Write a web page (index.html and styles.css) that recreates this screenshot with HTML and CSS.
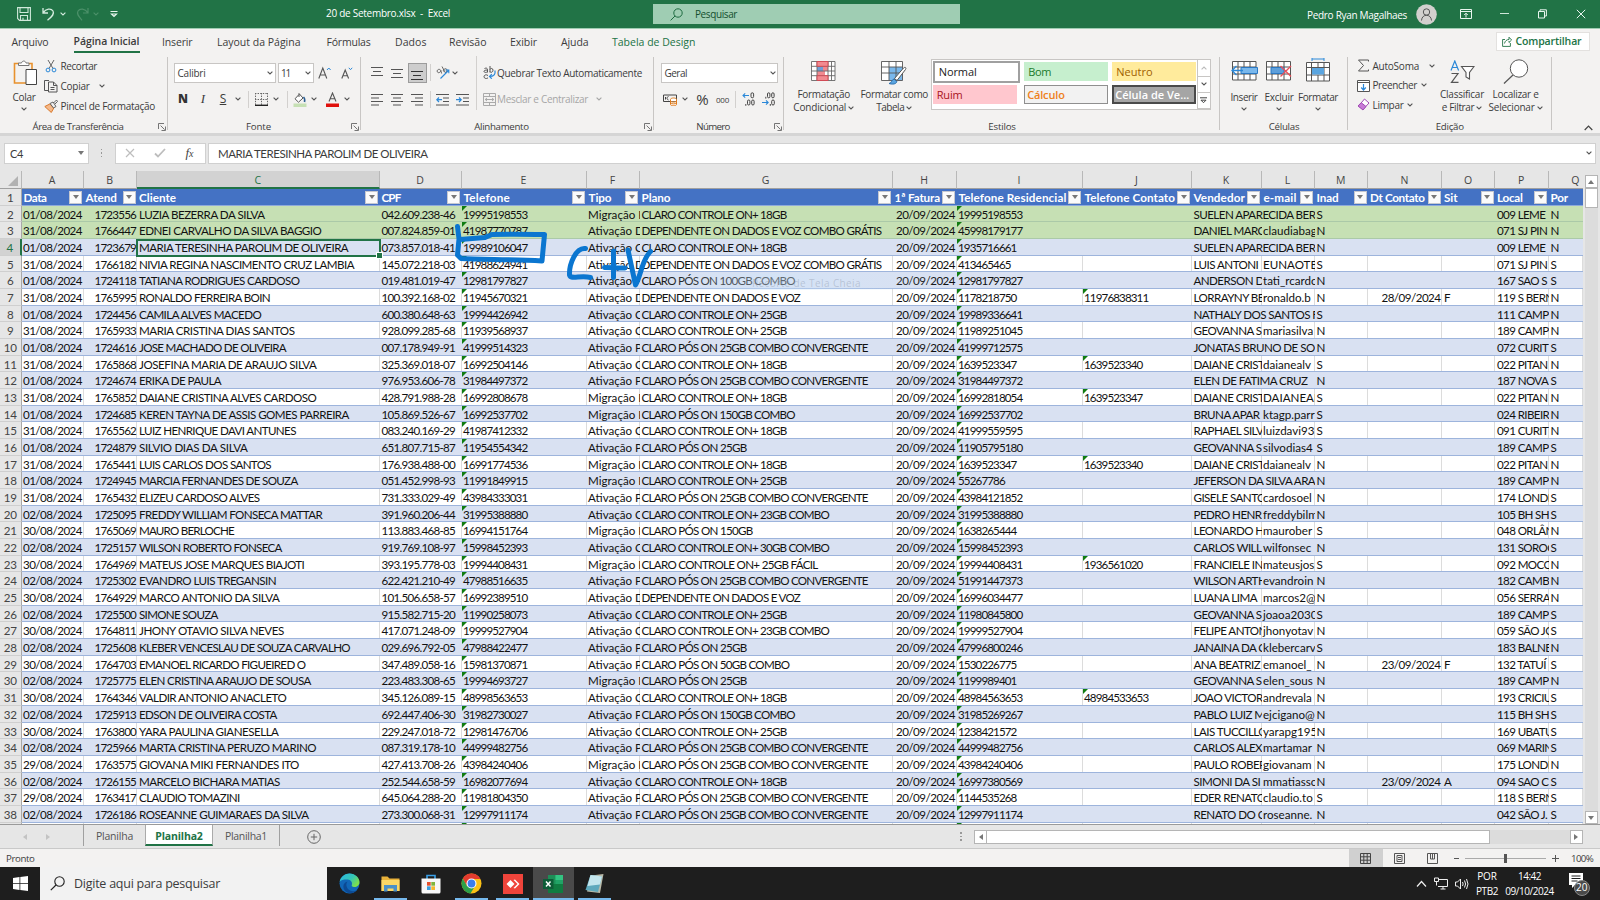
FILE: index.html
```
<!DOCTYPE html>
<html lang="pt-BR">
<head>
<meta charset="utf-8">
<title>20 de Setembro.xlsx - Excel</title>
<link rel="stylesheet" href="styles.css">
</head>
<body>
<svg class="defs" width="0" height="0">
  <symbol id="chev" viewBox="0 0 6 4"><path d="M.6.6 3 3 5.4.6" fill="none" stroke="currentColor" stroke-width="1.1"/></symbol>
  <symbol id="launch" viewBox="0 0 8 8"><path d="M.5 6V.5H6M2.6 2.6l4 4M7.5 3.5v4h-4" fill="none" stroke="#666" stroke-width=".9"/></symbol>
</svg>
<div class="app">
  <header class="titlebar">
    <div class="quick">
      <svg width="14" height="14" viewBox="0 0 14 14"><path d="M.6.6h12.8v12.8H2.5L.6 11.5zM3 .8v4.7h8V.8M3.5 13.2V8.5h7v4.7M6 13v-2.3" fill="none" stroke="#cfe9da" stroke-width="1.1"/></svg>
      <svg width="13" height="14" viewBox="0 0 13 14"><path d="M1 1v5h5M1.200 5.700C4 1.500 9 1 11 4c1.700 3-.8 5.500-5.500 9.300" fill="none" stroke="#d5ecdf" stroke-width="1.300"/></svg>
      <svg class="c lite" width="6" height="4"><use href="#chev"/></svg>
      <svg width="13" height="14" viewBox="0 0 13 14"><path d="M12 1v5H7M11.800 5.700C9 1.500 4 1 2 4c-1.700 3 .8 5.500 4 9.300" fill="none" stroke="#4b9069" stroke-width="1.200"/></svg>
      <svg class="c faded" width="6" height="4"><use href="#chev"/></svg>
      <svg width="8" height="8" viewBox="0 0 8 8"><path d="M.5 1.500h7M1.500 4 4 6.500 6.500 4z" fill="none" stroke="#e6f4ec" stroke-width="1.200"/></svg>
    </div>
    <div class="doc"><span data-w="124">20 de Setembro.xlsx&nbsp; - &nbsp;Excel</span></div>
    <div class="search"><svg width="13" height="13" viewBox="0 0 13 13"><circle cx="8" cy="5" r="4.200" fill="none" stroke="#1e6b41"/><path d="M5 8 .6 12.400" stroke="#1e6b41"/></svg><span data-w="42">Pesquisar</span></div>
    <div class="user"><span data-w="100">Pedro Ryan Magalhaes</span>
      <svg width="21" height="21" viewBox="0 0 21 21"><circle cx="10.500" cy="10.500" r="10.300" fill="#d2d0ce"/><circle cx="10.500" cy="8" r="3.200" fill="none" stroke="#555"/><path d="M5.500 16.500c.3-7 9.700-7 10 0" fill="none" stroke="#555"/></svg>
    </div>
    <div class="winbtns">
      <svg width="12" height="10" viewBox="0 0 12 10"><path d="M.5.500h11v9H.5zM.5 2.500h11M6 8.500v-4M4.200 6 6 4.200 7.800 6" fill="none" stroke="#e8f5ee"/></svg>
      <svg width="9" height="10" viewBox="0 0 9 10"><path d="M0 4.500h9" stroke="#cfe6d9"/></svg>
      <svg width="9" height="10" viewBox="0 0 9 10"><path d="M.5 2.500h6v6.500h-6zM2 2.500V.8h6.400V7H6.500" fill="none" stroke="#e8f5ee"/></svg>
      <svg width="10" height="10" viewBox="0 0 10 10"><path d="m.8.800 8.400 8.400M9.200.8.800 9.200" stroke="#e8f5ee"/></svg>
    </div>
  </header>
  <nav class="tabs">
    <span data-w="37">Arquivo</span><b class="on"><span data-w="66">Página Inicial</span></b><span data-w="30.5">Inserir</span><span data-w="83.5">Layout da Página</span><span data-w="44">Fórmulas</span><span data-w="31.5">Dados</span><span data-w="37.500">Revisão</span><span data-w="27">Exibir</span><span data-w="27.500">Ajuda</span><span class="green" data-w="83.500">Tabela de Design</span>
    <div class="share"><svg width="10" height="11" viewBox="0 0 10 11"><path d="M3 3.500H.6v6.900h7.800V7M2.500 7.500C3 5 4.500 3.600 7 3.500V1.200L9.600 4 7 6.500V5" fill="none" stroke="#217346" stroke-width=".9"/></svg><b data-w="66">Compartilhar</b></div>
  </nav>

  <section class="ribbon">
    <div class="group g-clip">
      <div class="content">
        <div class="big">
          <svg width="25" height="26" viewBox="0 0 25 26"><path d="M6 3.500H1.500V23H13M16 3.500h3V9" fill="none" stroke="#e8912d" stroke-width="1.600"/><path d="M5.500 5.500V3h3c.5-2.600 4-2.600 4.500 0h3v2.500z" fill="#fff" stroke="#777"/><path d="M13 9.500h10.500v15H13z" fill="#fff" stroke="#444"/></svg>
          <span data-w="23">Colar</span><svg class="c" width="6" height="4"><use href="#chev"/></svg>
        </div>
        <div class="list">
          <div><svg width="14" height="14" viewBox="0 0 14 14"><path d="m4 1 5 8.500M10 1 5 9.500" stroke="#666" fill="none"/><circle cx="4" cy="11" r="1.900" fill="none" stroke="#2b88d8"/><circle cx="10" cy="11" r="1.900" fill="none" stroke="#2b88d8"/></svg><span data-w="36.500">Recortar</span></div>
          <div><svg width="14" height="14" viewBox="0 0 14 14"><path d="M4 11.500H.5V1.500H5M4.500 3h5l3.500 3.500V13H4.500zM9.500 3v3.500H13M6.500 8.500h4M6.500 10.500h4" fill="none" stroke="#555"/></svg><span data-w="29">Copiar</span><svg class="c far" width="6" height="4"><use href="#chev"/></svg></div>
          <div><svg width="14" height="14" viewBox="0 0 14 14"><path d="m.8 7.500 5-2.500 4 4-2.500 4.500z" fill="#f5b98a" stroke="#d9792b"/><path d="M6 4.500 9.500 9 12 7.500 9 3zM9.500 4l3-3 1 1.500-2.500 2.500" fill="#eee" stroke="#555" stroke-width=".9"/></svg><span data-w="94.500">Pincel de Formatação</span></div>
        </div>
      </div>
      <div class="label"><span data-w="91">Área de Transferência</span><svg width="8" height="8"><use href="#launch"/></svg></div>
    </div>

    <div class="group g-font">
      <div class="content rows">
        <div class="r f1">
          <div class="box"><span data-w="28">Calibri</span><svg class="c" width="6" height="4"><use href="#chev"/></svg></div><i></i>
          <div class="box"><span data-w="9">11</span><svg class="c" width="6" height="4"><use href="#chev"/></svg></div>
          <svg width="14" height="14" viewBox="0 0 14 14"><path d="M.8 12.500 4.800 2l4 10.500M2.200 9h5.200" fill="none" stroke="#555" stroke-width="1.100"/><path d="m9 4 1.800-2 1.800 2" fill="none" stroke="#2b88d8"/></svg>
          <svg width="12" height="14" viewBox="0 0 12 14"><path d="M.8 12.500 4.200 4l3.400 8.500M2 9.700h4.400" fill="none" stroke="#555" stroke-width="1.100"/><path d="m7.800 1.800 1.700 1.900 1.700-1.900" fill="none" stroke="#2b88d8"/></svg>
        </div>
        <div class="r f2">
          <b class="n">N</b><em>I</em><u>S</u><svg class="c" width="6" height="4"><use href="#chev"/></svg><i class="sep"></i>
          <svg width="13" height="13" viewBox="0 0 13 13"><path d="M.5 0v12M6.500 0v12M12.500 0v12M0 .5h13M0 6.500h13" fill="none" stroke="#666" stroke-dasharray="1.400 1.200"/><path d="M0 12.300h13" stroke="#222" stroke-width="1.400"/></svg>
          <svg class="c" width="6" height="4"><use href="#chev"/></svg><i class="sep"></i>
          <svg width="14" height="15" viewBox="0 0 14 15"><path d="M6 2.500 2 6.800l3.500 3.400L10 6 6 1.500V5" fill="#fff" stroke="#555"/><path d="M10.500 5c1 1 1.600 2.500 1 5" fill="none" stroke="#2b5f94" stroke-width="1.600"/><path d="M.5 11.500h13v3.500H.5z" fill="#c6e0b4"/></svg>
          <svg class="c" width="6" height="4"><use href="#chev"/></svg>
          <svg width="13" height="15" viewBox="0 0 13 15"><path d="M3 9.500 6.500 1l3.500 8.500M4.200 6.700h4.600" fill="none" stroke="#555" stroke-width="1.100"/><path d="M0 11.500h13V15H0z" fill="#e0110c"/></svg>
          <svg class="c" width="6" height="4"><use href="#chev"/></svg>
        </div>
      </div>
      <div class="label"><span data-w="25">Fonte</span><svg width="8" height="8"><use href="#launch"/></svg></div>
    </div>

    <div class="group g-align">
      <div class="content split">
        <div class="rows left">
          <div class="r a1">
            <svg width="12" height="14" viewBox="0 0 12 14"><path d="M0 1.500h12M2 5.500h8M0 9.500h12" stroke="#555"/></svg>
            <svg width="12" height="14" viewBox="0 0 12 14"><path d="M0 3.500h12M2 7.500h8M0 11.500h12" stroke="#555"/></svg>
            <div class="pressed"><svg width="12" height="14" viewBox="0 0 12 14"><path d="M0 5.500h12M2 9.500h8M0 13.500h12" stroke="#333"/></svg></div>
            <i class="sep"></i>
            <svg width="14" height="14" viewBox="0 0 14 14"><path d="M4.800 4.500c-1-2-3.800-1.200-3.600.8s3 2 3.600-.8l.8 3M6 .5l3.500 6.500c2-1 2-4.500 0-4.300S7 4.500 7.600 5.500" fill="none" stroke="#555" stroke-width=".9"/><path d="m4.500 12.500 8-8M9.500 4h3.300v3.300" fill="none" stroke="#2b88d8" stroke-width="1.100"/></svg>
            <svg class="c" width="6" height="4"><use href="#chev"/></svg>
          </div>
          <div class="r a2">
            <svg width="12" height="13" viewBox="0 0 12 13"><path d="M0 1.500h12M0 5h8M0 8.500h12M0 12h8" stroke="#555"/></svg>
            <svg width="12" height="13" viewBox="0 0 12 13"><path d="M0 1.500h12M2 5h8M0 8.500h12M2 12h8" stroke="#555"/></svg>
            <svg width="12" height="13" viewBox="0 0 12 13"><path d="M0 1.500h12M4 5h8M0 8.500h12M4 12h8" stroke="#555"/></svg>
            <i class="sep"></i>
            <svg width="13" height="13" viewBox="0 0 13 13"><path d="M0 1.500h13M7 5h6M7 8.500h6M0 12h13" stroke="#555"/><path d="M6 6.700H.8M3 4.500.8 6.700 3 9" fill="none" stroke="#2b88d8" stroke-width="1.200"/></svg>
            <svg width="13" height="13" viewBox="0 0 13 13"><path d="M0 1.500h13M7 5h6M7 8.500h6M0 12h13" stroke="#555"/><path d="M0 6.700h5.200M3 4.500l2.200 2.200L3 9" fill="none" stroke="#2b88d8" stroke-width="1.200"/></svg>
          </div>
        </div>
        <div class="rows right">
          <div class="r w"><svg width="13" height="13" viewBox="0 0 13 13"><path d="M1.500 2.500c2-1 3 0 3 1V6.500M4.500 4C2 4 1 4.500 1 5.500s2.500 1.500 3.500 0M7 0v6.500M7 3.500c.5-1.500 3-1.500 3 .7S7.500 7 7 5.500M5 9.500c-2-1.500-4-.3-4 1.200s2 2.500 4 1.200" fill="none" stroke="#555"/><path d="M11.800 4.500c1 3.500-1 6-5 6M8.800 8.200l-2.300 2.300 2.300 2.200" fill="none" stroke="#2b88d8" stroke-width="1.200"/></svg><span data-w="145">Quebrar Texto Automaticamente</span></div>
          <div class="r w off"><svg width="13" height="13" viewBox="0 0 13 13"><path d="M.5.500h12v12H.5zM.5 3.500h12M.5 9.500h12M6.500.5v3M6.500 9.500v3M2 6.500h9M4 5 2.200 6.500 4 8M9 5l1.800 1.500L9 8" fill="none" stroke="#aaa"/></svg><span data-w="91">Mesclar e Centralizar</span><svg class="c" width="6" height="4"><use href="#chev"/></svg></div>
        </div>
      </div>
      <div class="label"><span data-w="54.500">Alinhamento</span><svg width="8" height="8"><use href="#launch"/></svg></div>
    </div>

    <div class="group g-num">
      <div class="content rows">
        <div class="r n1"><div class="box"><span data-w="22.500">Geral</span><svg class="c" width="6" height="4"><use href="#chev"/></svg></div></div>
        <div class="r n2">
          <svg width="15" height="13" viewBox="0 0 15 13"><path d="M.5 2h13v6.500H.5z" fill="none" stroke="#444"/><path d="M5.500 3.500c-2 .5-2 3 0 3.500M2.500 4v2.500" fill="none" stroke="#444"/><path d="M7.500 6.500c0-2 6-2 6 0v5c0 1.600-6 1.600-6 0zM7.500 8.200c1 1.200 5 1.200 6 0M7.500 10c1 1.200 5 1.200 6 0" fill="#fff" stroke="#e07b1a"/></svg>
          <svg class="c" width="6" height="4"><use href="#chev"/></svg>
          <span class="pct">%</span><span class="zeros" data-w="13">000</span><i class="sep"></i>
          <svg width="14" height="14" viewBox="0 0 14 14"><g fill="none" stroke="#444"><rect x="9" y=".8" width="2.600" height="5" rx="1.300"/><rect x="5.500" y="8" width="2.400" height="5" rx="1.200"/><rect x="9.700" y="8" width="2.400" height="5" rx="1.200"/><path d="M3.800 12v1.800"/></g><path d="M7 3.500H1M3.200 1.300 1 3.500l2.200 2.200" fill="none" stroke="#2b88d8" stroke-width="1.100"/></svg>
          <svg width="14" height="14" viewBox="0 0 14 14"><g fill="none" stroke="#444"><rect x="9.700" y="8" width="2.600" height="5" rx="1.300"/><rect x="5.500" y=".8" width="2.400" height="5" rx="1.200"/><rect x="9.700" y=".8" width="2.400" height="5" rx="1.200"/><path d="M3.800 4.800v1.800M8.300 12v1.800"/></g><path d="M0 10.500h6M4 8.300l2.200 2.200L4 12.700" fill="none" stroke="#2b88d8" stroke-width="1.100"/></svg>
        </div>
      </div>
      <div class="label"><span data-w="33.500">Número</span><svg width="8" height="8"><use href="#launch"/></svg></div>
    </div>

    <div class="group g-style">
      <div class="content">
        <div class="big cf">
          <svg width="25" height="20" viewBox="0 0 25 20"><path d="M.5.500h23.500v19H.5z" fill="#fff"/><path d="M12 5.500h5V10h-5zM6 10h8v4H6z" fill="#f28a90"/><path d="M6 5.500h6v4.700H6z" fill="#6f9fd8"/><path d="M.5.500h23.500v19H.5zM.5 5.300h23.500M.5 10h23.500M.5 14.700h23.500M6 .5v19M17 .5v19M20.500.5v19" fill="none" stroke="#666" stroke-width=".9"/><path d="M6 .5h11v4.800H6zM6 14.700h11v4.800H6z" fill="#f28a90" stroke="#d14b55"/></svg>
          <span data-w="52.500">Formatação</span><div><span data-w="53">Condicional</span><svg class="c" width="6" height="4"><use href="#chev"/></svg></div>
        </div>
        <div class="big ft">
          <svg width="26" height="24" viewBox="0 0 26 24"><path d="M.5.500h21v19H.5z" fill="#fff"/><path d="M8 6h13.500v13.500H8z" fill="#7ab8ec"/><path d="M.5.500h21v19H.5zM.5 6h21M.5 12h21M8 .5v19M15 .5v19" fill="none" stroke="#555" stroke-width=".9"/><path d="M8 22.500c3-.5 2-3.500 5-4.500l3 2.500c-1 3-5 3-8 2z" fill="#5aa5e0" stroke="#2b6fae"/><path d="m13.500 17.500 9-10.500c2-1.500 3 0 2 1.500l-8.500 11z" fill="#fff" stroke="#555"/></svg>
          <span data-w="67.500">Formatar como</span><div><span data-w="28">Tabela</span><svg class="c" width="6" height="4"><use href="#chev"/></svg></div>
        </div>
        <div class="gallery">
          <div class="sw">
            <div class="s normal"><span data-w="38">Normal</span></div><div class="s bom"><span data-w="23">Bom</span></div><div class="s neutro"><span data-w="36.500">Neutro</span></div>
            <div class="s ruim"><span data-w="26">Ruim</span></div><div class="s calc"><span data-w="37.500">Cálculo</span></div><div class="s cel"><span data-w="74">Célula de Ve...</span></div>
          </div>
          <div class="arrows"><div><svg class="c up" width="6" height="4"><use href="#chev"/></svg></div><div><svg class="c" width="6" height="4"><use href="#chev"/></svg></div><div><svg width="7" height="7" viewBox="0 0 7 7"><path d="M0 .8h7M1 3.200 3.500 5.700 6 3.200z" fill="none" stroke="#444"/></svg></div></div>
        </div>
      </div>
      <div class="label wide"><span data-w="27.500">Estilos</span></div>
    </div>

    <div class="group g-cell">
      <div class="content">
        <div class="big"><svg width="27" height="20" viewBox="0 0 27 20"><path d="M1.500.5h23.500v18.500H1.500zM1.500 6h23.500M1.500 13h23.500M7 .5V19M13 .5V19M19 .5V19" fill="#fff" stroke="#555"/><path d="M10 6.500h16.500v6H10z" fill="#7ab8ec" stroke="#2b78c2"/><path d="M12 9.500H1M5.500 5 1 9.500 5.500 14" fill="none" stroke="#2b88d8" stroke-width="1.300"/></svg><span data-w="27">Inserir</span><svg class="c" width="6" height="4"><use href="#chev"/></svg></div>
        <div class="big"><svg width="26" height="20" viewBox="0 0 26 20"><path d="M.5.500h24V19H.5zM.5 6h24M.5 13h24M6 .5V19M12 .5V19M18 .5V19" fill="#fff" stroke="#555"/><path d="M5 6.500h13v6H5z" fill="#5d9fdb" stroke="#2b78c2"/><path d="M14.500 5 25 15.500M25 5 14.500 15.500" stroke="#e8505b" stroke-width="1.400"/></svg><span data-w="29">Excluir</span><svg class="c" width="6" height="4"><use href="#chev"/></svg></div>
        <div class="big"><svg width="24" height="24" viewBox="0 0 24 24"><path d="M.5 4.500h23V23H.5zM.5 9.500h23M.5 17h23M5.500 4.500V23M18 4.500V23M12 4.500v5M12 17v6" fill="#fff" stroke="#555"/><path d="M6 10h12v6.500H6z" fill="#5aa5e0"/><path d="M6 1h12M6 0v3M18 0v3" stroke="#2b88d8"/></svg><span data-w="40">Formatar</span><svg class="c" width="6" height="4"><use href="#chev"/></svg></div>
      </div>
      <div class="label wide"><span data-w="30.500">Células</span></div>
    </div>

    <div class="group g-edit">
      <div class="content">
        <div class="list">
          <div><svg width="13" height="13" viewBox="0 0 13 13"><path d="M11.500 2.500V1h-10l5 5.500-5 5.500h10v-1.500" fill="none" stroke="#555"/></svg><span data-w="46.500">AutoSoma</span><svg class="c far" width="6" height="4"><use href="#chev"/></svg></div>
          <div><svg width="13" height="13" viewBox="0 0 13 13"><path d="M.5 1.500h12v11H.5zM.5 3.500h12" fill="#fff" stroke="#555"/><path d="M6.500 5v6M4.200 8.500 6.500 11l2.300-2.500" fill="none" stroke="#2b88d8" stroke-width="1.200"/></svg><span data-w="44.500">Preencher</span><svg class="c near" width="6" height="4"><use href="#chev"/></svg></div>
          <div><svg width="13" height="13" viewBox="0 0 13 13"><path d="M7.500 1 12 5 6 11.500 1.500 8z" fill="#fff" stroke="#a14bb5"/><path d="M4.200 4.700 9 8.500l-3 3.500L1 8z" fill="#c77bd6" stroke="#a14bb5"/></svg><span data-w="31">Limpar</span><svg class="c near" width="6" height="4"><use href="#chev"/></svg></div>
        </div>
        <div class="big cl"><svg width="25" height="24" viewBox="0 0 25 24"><path d="M1 10.500 4.800 1l3.800 9.500M2.300 7.500h5" fill="none" stroke="#2b88d8" stroke-width="1.200"/><path d="M1.500 13.500H8L1.500 22.300H8.500" fill="none" stroke="#555" stroke-width="1.200"/><path d="M11.500 6.500h12.500l-4.500 6V19l-3.500-2v-4.500z" fill="#fff" stroke="#555" stroke-width="1.100"/></svg><span data-w="44">Classificar</span><div><span data-w="32.500">e Filtrar</span><svg class="c" width="6" height="4"><use href="#chev"/></svg></div></div>
        <div class="big lo"><svg width="26" height="25" viewBox="0 0 26 25"><circle cx="16" cy="9.500" r="8.700" fill="#fff" stroke="#555"/><path d="M10 16 1 24.500" stroke="#555" stroke-width="1.200"/></svg><span data-w="46">Localizar e</span><div><span data-w="46">Selecionar</span><svg class="c" width="6" height="4"><use href="#chev"/></svg></div></div>
      </div>
      <div class="label wide"><span data-w="28">Edição</span></div>
    </div>
    <div class="collapse"><svg width="9" height="6" viewBox="0 0 9 6"><path d="M.7 5 4.500 1l3.800 4" fill="none" stroke="#444" stroke-width="1.200"/></svg></div>
  </section>

  <section class="fbar">
    <div class="namebox"><span data-w="13">C4</span><i class="tri"></i></div>
    <div class="dots"><i></i><i></i><i></i></div>
    <div class="fx">
      <svg width="10" height="10" viewBox="0 0 10 10"><path d="m1 1 8 8M9 1 1 9" stroke="#bdbdbd" stroke-width="1.200"/></svg>
      <svg width="12" height="10" viewBox="0 0 12 10"><path d="m1 5.500 3 3L11 1" fill="none" stroke="#bdbdbd" stroke-width="1.800"/></svg>
      <span class="fxt">f<small>x</small></span>
    </div>
    <div class="input"><span data-w="209.500">MARIA TERESINHA PAROLIM DE OLIVEIRA</span><svg class="c" width="6" height="4"><use href="#chev"/></svg></div>
  </section>

  <main class="sheet">
    <div class="grid" id="grid"></div>
    <div class="vscroll"><div class="sb"><i class="tri up"></i></div><div class="thumb"></div><div class="space"></div><div class="sb"><i class="tri"></i></div></div>
    <div class="selection"><i></i></div>
    <div class="ghost"><span data-w="109">Recorte de Tela Cheia</span></div>
    <svg class="ink" width="200" height="70" viewBox="455 220 200 70"><g fill="none" stroke="#0b76d0" stroke-width="5" stroke-linecap="round" stroke-linejoin="round"><path d="M457.500 226.500 459 239 457.500 255 461 258.500C480 260 510 259 542 261L544.500 234.500C520 234 505 234 492 234.500L485 237.500 460 239.500"/><path d="M585.500 248.500C576 247 569 264 569.500 275 571 280 580 275 590.500 277.500"/><path d="M604.500 267.500 625 268M613.500 251 613.500 277.500"/><path d="M628 250 635.500 285C641 276 642 259 650.500 251.500"/></g></svg>
  </main>

  <section class="sheettabs">
    <div class="navs"><i class="l"></i><i class="rr"></i></div>
    <div class="tab first"><span data-w="37">Planilha</span></div>
    <div class="tab cur"><b data-w="47.500">Planilha2</b></div>
    <div class="tab last"><span data-w="42">Planilha1</span></div>
    <svg class="plus" width="14" height="14" viewBox="0 0 14 14"><circle cx="7" cy="7" r="6.300" fill="none" stroke="#666"/><path d="M3.800 7h6.400M7 3.800v6.400" stroke="#666"/></svg>
    <div class="dots"><i></i><i></i><i></i></div>
    <div class="hscroll"><div class="sb"><i class="tri lf"></i></div><div class="thumb"></div><div class="space"></div><div class="sb"><i class="tri rt"></i></div></div>
  </section>

  <section class="status">
    <span class="ready" data-w="28.500">Pronto</span>
    <div class="view on"><svg width="11" height="11" viewBox="0 0 11 11"><path d="M.5.500h10v10H.5zM.5 3.800h10M.5 7.200h10M3.800.5v10M7.200.5v10" fill="none" stroke="#444"/></svg></div>
    <div class="view"><svg width="11" height="11" viewBox="0 0 11 11"><path d="M.5.500h10v10H.5zM3 2.500h5v6H3zM4 4.500h3M4 6.500h3" fill="none" stroke="#555"/></svg></div>
    <div class="view"><svg width="11" height="11" viewBox="0 0 11 11"><path d="M.5.500h10v10H.5zM3.500.5V6h4V.5M5.500.5V6" fill="none" stroke="#555"/></svg></div>
    <div class="zoom"><span class="mn"></span><div class="track"><i></i></div><svg width="7" height="7" viewBox="0 0 7 7"><path d="M0 3.500h7M3.500 0v7" stroke="#555"/></svg></div>
    <span class="pc" data-w="22">100%</span>
  </section>

  <footer class="taskbar">
    <div class="start"><svg width="15" height="15" viewBox="0 0 15 15"><path d="M0 2 6.500 1v6H0zM7.300.9 15 0v7H7.300zM0 7.800h6.500V14L0 13zM7.300 7.800H15V15l-7.700-1z" fill="#fff"/></svg></div>
    <div class="tsearch"><svg width="15" height="15" viewBox="0 0 15 15"><circle cx="9.500" cy="5.500" r="4.700" fill="none" stroke="#222" stroke-width="1.100"/><path d="M6 9 .8 14.200" stroke="#222" stroke-width="1.200"/></svg><span data-w="146">Digite aqui para pesquisar</span></div>
    <div class="app-ic"><svg width="21" height="21" viewBox="0 0 21 21"><defs><linearGradient id="e1" x1="0" y1="0" x2="1" y2=".6"><stop offset="0" stop-color="#2bb6e8"/><stop offset=".6" stop-color="#35c6b4"/><stop offset="1" stop-color="#7ee04a"/></linearGradient></defs><circle cx="10.500" cy="10.500" r="10" fill="#1167b8"/><path d="M.6 9C1.500 3.500 6 .5 10.500.5c6 0 10 4.500 10 8.500s-3.500 5.500-6.500 4.800c-2-.6-1-1.500-1-3.300C13 8 10.500 6.500 8 6.500 4.500 6.500 1.500 7 .6 9z" fill="url(#e1)"/><path d="M7.500 13c1 4.500 5.500 6.500 10.500 4.300-4 4.500-10 3.500-12.500 0C3.500 14 4 9.500 8.500 8.500c-1 1.300-1.400 3-1 4.500z" fill="#0c4a94"/></svg></div>
    <div class="app-ic run"><svg width="19" height="18" viewBox="0 0 19 18"><path d="M.5 1.500h6l2 2h10v12.500H.5z" fill="#e9b23a"/><path d="M.5 5h18v11H.5z" fill="#fbd766"/><path d="M3 16.500V10h13v6.500h-3.500v-3h-6v3z" fill="#4a90c8"/></svg></div>
    <div class="app-ic"><svg width="20" height="20" viewBox="0 0 20 20"><path d="M6 5V1.500h8V5" fill="none" stroke="#3aa0e8" stroke-width="1.600"/><path d="M.5 4.500h19V18q0 1.500-1.500 1.500H2Q.5 19.500.5 18z" fill="#f7f7f7"/><path d="M6 8h3.700v3.700H6z" fill="#e5502d"/><path d="M10.300 8H14v3.700h-3.700z" fill="#7fb53c"/><path d="M6 12.300h3.700V16H6z" fill="#3a9fe0"/><path d="M10.300 12.300H14V16h-3.700z" fill="#f5b82e"/></svg></div>
    <div class="app-ic run"><svg width="21" height="21" viewBox="0 0 21 21"><circle cx="10.500" cy="10.500" r="10" fill="#fbc116"/><path d="M10.500.5A10 10 0 0 0 1.800 5.600L6 13l4.500-7h8.900A10 10 0 0 0 10.500.5z" fill="#e33b2e"/><path d="M1.800 5.600A10 10 0 0 0 9.500 20.450L14 13H6z" fill="#2da04a"/><circle cx="10.500" cy="10.500" r="5" fill="#fff"/><circle cx="10.500" cy="10.500" r="3.900" fill="#3b7ded"/></svg></div>
    <div class="app-ic run"><svg width="20" height="20" viewBox="0 0 20 20"><path d="M0 0h20v20H0z" fill="#ef443b"/><path d="m3.500 10 4-4 4 4-4 4zM10.500 6l1.500-.5L16.500 10 12 14.500l-1.500-.5 4-4z" fill="#fff"/></svg></div>
    <div class="app-ic run active"><svg width="20" height="18" viewBox="0 0 20 18"><path d="M5 0h15v18H5z" fill="#21a366"/><path d="M5 0h7.500v9H5z" fill="#1d8f57"/><path d="M12.500 0H20v5h-7.500z" fill="#33c481"/><path d="M5 9h15v9H5z" fill="#107c41"/><path d="M0 4h10.500v10H0z" fill="#0e5c37"/><path d="m3 6.500 4.500 5M7.500 6.500 3 11.500" stroke="#fff" stroke-width="1.500"/></svg></div>
    <div class="app-ic run"><svg width="19" height="20" viewBox="0 0 19 20"><path d="M6 1.500 18.500 0 15 19 2 17.500z" fill="#b9b9a8"/><path d="M5.500 1 17 2.500 13 18 .5 16z" fill="#5fa9bd"/><path d="M5.500 1 17 2.500l-2 8L2.500 12z" fill="#c4e6ee"/></svg></div>
    <div class="tray">
      <svg width="11" height="8" viewBox="0 0 11 8"><path d="m1 6.500 4.500-5 4.500 5" fill="none" stroke="#eee" stroke-width="1.200"/></svg>
      <svg width="14" height="13" viewBox="0 0 14 13"><path d="M4 2.500h9.500v7H4M6.500 12h5M9 9.500V12M.5 1h4v3.500h-4zM2.500 4.500v4" fill="none" stroke="#eee"/></svg>
      <svg width="14" height="12" viewBox="0 0 14 12"><path d="M.5 4h2L5.500 1v10l-3-3h-2zM7.500 4q1.300 2 0 4M9.500 2.500q2.200 3.500 0 7M11.500 1q3 5 0 10" fill="none" stroke="#eee"/></svg>
      <div class="two"><span data-w="19.500">POR</span><span data-w="22">PTB2</span></div>
      <div class="two"><span data-w="23">14:42</span><span data-w="48.500">09/10/2024</span></div>
      <div class="notif"><svg width="22" height="26" viewBox="0 0 22 26"><path d="M1 2h14v12H7l-3 3v-3H1z" fill="#fff"/><path d="M3.500 5h9M3.500 7.500h9M3.500 10h6" stroke="#1e1e1e"/><circle cx="14" cy="17" r="7.500" fill="#4a4a4a" stroke="#8a8a8a"/></svg><span>20</span></div>
    </div>
  </footer>
</div>
<script src="grid.js"></script>
</body>
</html>
```

FILE: styles.css
```
* { box-sizing: border-box; }
body { margin: 0; font-family: "Open Sans", "Noto Sans", sans-serif; font-size: 10px; color: #3c3c3c; background: #e6e6e6; }
i { display: block; }
svg { display: block; flex: none; }
svg.defs { position: absolute; }
.c { color: #555; }
.app { width: 1600px; height: 900px; overflow: hidden; display: flex; flex-direction: column; }
.app > * { flex: none; }
[data-w] { display: inline-block; white-space: nowrap; }

/* title bar */
.titlebar { height: 29px; background: #217346; border-bottom: 1px solid #9fcdb3; color: #fff; display: grid; grid-template-columns: 320px 333px 307px 487px 1fr; align-items: center; }
.quick { display: flex; align-items: center; padding-left: 17px; }
.quick svg:nth-child(2) { margin-left: 11px; }
.quick svg:nth-child(3) { margin-left: 5px; }
.quick svg:nth-child(4) { margin-left: 10px; }
.quick svg:nth-child(5) { margin-left: 4px; }
.quick svg:nth-child(6) { margin-left: 11px; }
.lite { color: #d5ecdf; }
.faded { color: #4b9069; }
.doc { padding-left: 6px; margin-top: -2px; }
.search { height: 20px; background: #9fcdb3; color: #14502f; display: flex; align-items: center; gap: 12px; padding-left: 17px; }
.user { display: flex; align-items: center; justify-content: flex-end; gap: 9px; padding-right: 10px; }
.user span { margin-top: 2px; }
.winbtns { display: grid; grid-template-columns: 38px 38.500px 38.500px 38px; justify-items: center; margin-top: -1px; }

/* ribbon tabs */
.tabs { height: 27px; background: #f3f2f1; padding: 0 10.500px 0 11.500px; display: grid; grid-template-columns: 62px 88.500px 55px 109.500px 68.500px 54px 61px 51px 51px 1fr auto; align-items: center; justify-items: start; line-height: 15px; font-size: 10.500px; }
.tabs > * { margin-top: -1px; }
.tabs .on { align-self: start; margin-top: 5px; height: 19px; border-bottom: 2.500px solid #217346; font-weight: 600; }
.green { color: #217346; }
.share { height: 19px; background: #fff; border: 1px solid #e3e1df; display: flex; align-items: center; gap: 4px; padding: 0 7px 0 5px; color: #217346; margin-top: -3px; }
.share b { font-weight: 600; }

/* ribbon */
.ribbon { height: 80px; background: #f3f2f1; border-bottom: 3px solid #d5d5d5; display: flex; }
.group { height: 77px; display: flex; flex-direction: column; background: linear-gradient(#c8c6c4, #c8c6c4) right 1px / 1px 73px no-repeat; }
.content { height: 64px; display: flex; flex: none; }
.content.rows { display: block; }
.rows { padding-top: 6.500px; }
.r { height: 20px; display: grid; align-items: center; justify-items: center; margin-bottom: 6.500px; }
.label { height: 13px; display: grid; grid-template-columns: 1fr 12px; align-items: center; justify-items: center; line-height: 13px; font-size: 9.700px; flex: none; }
.label.wide { grid-template-columns: 1fr; }
.g-clip { width: 168px; } .g-font { width: 193px; } .g-align { width: 293px; } .g-num { width: 130px; } .g-style { width: 436px; } .g-cell { width: 128px; } .g-edit { width: 203.500px; }
.big { display: flex; flex-direction: column; align-items: center; padding-top: 5px; line-height: 13px; height: 58px; }
.big > svg:first-child { margin-bottom: auto; }
.big > div { display: flex; align-items: center; gap: 2px; }
.big > .c { margin: 3.500px 0 3px; }
.g-clip .big { width: 44px; padding: 4px 0 0 4px; }
.g-clip .big svg:first-child { margin-left: 3px; }
.list { display: grid; grid-template-rows: 20px 20px 20px; }
.list > div { display: flex; align-items: center; gap: 2.500px; }
.list .far { margin-left: 7px; }
.box { height: 20px; width: 100%; background: #fff; border: 1px solid #c8c6c4; display: flex; align-items: center; justify-content: space-between; padding: 0 1.500px 0 2.500px; }
.sep { width: 1px; height: 17px; background: #d2d0ce; }
.f1 { padding-left: 6px; grid-template-columns: 101.500px 2px 36px 23px 20px; }
.f2 { padding-left: 5px; grid-template-columns: 20px 20px 20px 10px 10px 16px 14px 8px 18px 10px 27px 2px; }
.f2 b, .f2 em, .f2 u { font-size: 12px; line-height: 14px; }
.f2 em { font-family: "Liberation Serif", serif; font-size: 13px; }
.f2 .n { font-weight: 800; color: #333; }
.left { width: 115px; height: 60px; padding-left: 6px; }
.a1 { grid-template-columns: 20px 20px 20px 7px 18px 6px; }
.a2 { grid-template-columns: 20px 20px 20px 7px 17px 23px; }
.pressed { width: 19px; height: 20px; background: #cdcdcd; border: 1px solid #9c9c9c; display: grid; place-items: center; }
.right { height: 54px; border-left: 1px solid #d2d0ce; }
.r.w { display: flex; gap: 1.500px; padding-left: 5.500px; }
.off { color: #a6a6a6; }
.off .c { color: #a6a6a6; margin-left: 6px; }
.n1 { padding: 0 6px 0 7px; }
.n2 { padding-left: 7px; grid-template-columns: 18px 11px 25px 15px 11px 16px 23px; }
.pct { font-size: 15px; line-height: 16px; }
.zeros { font-size: 8px; }
.cf { width: 72.500px; }
.ft { width: 68.500px; }
.g-style .content > .cf { margin-left: 3.500px; }
.gallery { margin: 2.500px 0 0 2.200px; width: 280px; height: 51.500px; border: 1px solid #c8c6c4; background: #fff; display: flex; }
.sw { display: grid; grid-template-columns: 87.500px 84px 84px; grid-template-rows: 22px 19px; gap: 2.500px 4px; padding: 1px 0 0 1px; font-size: 11px; width: 265px; align-content: start; align-items: center; background: #fff; }
.s { height: 18.500px; display: flex; align-items: center; padding-left: 4px; line-height: 14px; }
.s.normal { height: 22px; border: 2px solid #a0a0a0; color: #222; }
.bom { background: #c6efce; color: #1a7a2a; }
.neutro { background: #ffeb9c; color: #a06000; }
.ruim { background: #ffc7ce; color: #a81420; margin-right: 3px; }
.s.calc { background: #f2f2f2; border: 1px solid #8f8f8f; color: #ee8020; font-weight: 600; padding-left: 2px; }
.s.cel { background: #a5a5a5; border: 2px double #4a4a4a; color: #fff; font-weight: 600; padding-left: 1px; }
.arrows { width: 13px; display: grid; grid-template-rows: 17px 16px 1fr; }
.arrows div { border: 1px solid #c8c6c4; border-width: 0 0 1px 1px; display: grid; place-items: center; }
.up { transform: scaleY(-1); }
.arrows .up { color: #bbb; }
.g-cell .content { padding-left: 6px; }
.g-cell .big:nth-child(1) { width: 36px; }
.g-cell .big:nth-child(2) { width: 34px; }
.g-cell .big:nth-child(3) { width: 44px; padding-top: 2px; }
.g-edit .list { width: 85.500px; padding: 0 0 0 9px; grid-template-rows: 19.500px 19.500px 19.500px; }
.g-edit .near { margin-left: 1px; }
.cl { width: 57px; }
.g-edit .lo { width: 50px; padding-top: 3px; }
.g-edit .cl { padding-top: 4px; }
.collapse { width: 48px; display: flex; align-items: flex-end; justify-content: flex-end; padding: 0 7px 2px 0; }

/* formula bar */
.fbar { height: 35px; background: #e6e6e6; display: flex; padding: 6.500px 4px 0 4px; }
.fbar > div { height: 21px; }
.namebox { width: 84.500px; background: #fff; border: 1px solid #d0d0d0; display: flex; align-items: center; justify-content: space-between; padding: 0 4px 0 5px; font-family: Lato, sans-serif; font-size: 11px; }
.tri { width: 0; height: 0; border: 3px solid transparent; border-top: 4px solid #777; border-bottom: 0; }
.dots { width: 26px; display: flex; flex-direction: column; align-items: center; justify-content: center; gap: 2px; }
.dots i { width: 1.500px; height: 1.500px; background: #999; }
.fx { width: 91px; background: #fff; border: 1px solid #d0d0d0; display: grid; grid-template-columns: 29px 30px 30px; place-items: center; }
.fxt { font: italic 13px "Liberation Serif", serif; color: #444; }
.fxt small { font-size: 10px; }
.input { flex: 1; margin-left: 2.500px; background: #fff; border: 1px solid #d0d0d0; display: flex; align-items: center; justify-content: space-between; padding: 0 3px 0 9px; font-family: Lato, sans-serif; font-size: 11.500px; }

/* sheet */
.sheet { position: relative; height: 654px; overflow: hidden; display: flex; font-family: Lato, Carlito, sans-serif; color: #111; border-bottom: 1px solid #9a9a9a; }
.grid { width: 1582.500px; height: 654px; overflow: hidden; }
.row { display: grid; grid-template-columns: 21.500px 62px 53.500px 242.500px 82px 125px 53px 253px 64px 126px 109px 70px 53px 53.500px 74px 53px 53.500px 34px; height: 16.6719px; line-height: 17.200px; font-size: 11.600px; }
.row > div { overflow: hidden; white-space: nowrap; padding-left: 2px; min-width: 0; position: relative; }
.row > .rh { background: #e6e6e6; border-right: 1px solid #a8a8a8; border-bottom: 1px solid #cfcfcf; text-align: center; padding: 0; color: #444; letter-spacing: -.3px; }
.row.letters { height: 18px; background: #e6e6e6; color: #444; line-height: 19px; font-family: "Open Sans", sans-serif; font-size: 10.500px; }
.letters > div { text-align: center; border-right: 1px solid #b8b8b8; border-bottom: 1px solid #a0a0a0; padding: 0; }
.letters > .last { text-align: right; padding-right: 3px; border-right: 0; }
.letters > .sel { background: #d2d2d2; color: #217346; border-bottom: 2px solid #217346; }
.letters > .corner { display: flex; justify-content: flex-end; align-items: flex-end; padding: 0 3px 2px 0; }
.corner i { width: 0; height: 0; border-left: 10px solid transparent; border-bottom: 10px solid #b2b2b2; }
.row.head > .h { background: #4472c4; color: #fff; font-weight: 700; font-size: 11.700px; line-height: 16px; display: flex; align-items: center; justify-content: space-between; padding-right: 1.500px; border-bottom: 1px solid #8ea9db; overflow: visible; }
.fbtn { flex: none; width: 13px; height: 13px; background: #fbfbfb; border: 1px solid #c5c8d0; display: grid; place-items: center; }
.d { border-bottom: 1px solid #9db4dc; }
.white .d { background: #fff; box-shadow: inset -1px 0 #dcdcdc; }
.blue .d { background: #d9e1f2; }
.lime .d { background: #c6e0b4; border-bottom-color: #abc9a8; }
.row > .num { text-align: right; padding: 0 1px 0 0; letter-spacing: -.8px; }
.row > .date { letter-spacing: -.52px; padding-right: 1.500px; }
.row > .tel { letter-spacing: -.88px; padding-left: 1.500px; }
.row > .cpf { letter-spacing: -.73px; }
.row > .tel.err::before { content: ""; position: absolute; left: 0; top: 0; border-top: 5px solid #107c10; border-right: 5px solid transparent; }
.row > .wide { grid-column: span 2; }
.row > .txt { letter-spacing: -.4px; }
.row > .seller { letter-spacing: -.55px; }
.row > .place { letter-spacing: -.62px; }
.row > .kind { letter-spacing: 0; padding-left: 1.500px; }
.row > .mail { letter-spacing: 0; padding-left: 1.500px; }
.row > .curh { background: #d2d2d2; color: #217346; border-right: 2px solid #217346; }
.vscroll { width: 17.500px; background: #e6e6e6; display: flex; flex-direction: column; align-items: center; padding-top: 4px; }
.sb { width: 13px; height: 13px; background: #fff; border: 1px solid #b5b5b5; display: grid; place-items: center; flex: none; }
.vscroll .thumb { width: 13px; height: 20px; background: #fff; border: 1px solid #b5b5b5; }
.vscroll .space { flex: 1; width: 13px; background: #dcdcdc; }
.tri.up { transform: rotate(180deg); } .tri.lf { transform: rotate(90deg); } .tri.rt { transform: rotate(-90deg); }
.selection { position: absolute; left: 136px; top: 67.500px; width: 244.500px; height: 18.500px; border: 2px solid #217346; }
.selection i { position: absolute; right: -3px; bottom: -3px; width: 5px; height: 5px; background: #217346; outline: 1px solid #fff; }
.ghost { position: absolute; left: 650px; top: 101.500px; width: 300px; height: 17px; background: linear-gradient(90deg, rgba(205,228,250,0), rgba(205,228,250,.45) 40%, rgba(205,228,250,0)); color: rgba(110,120,140,.3); padding: 3px 0 0 102px; font-family: "Open Sans", sans-serif; font-size: 10px; line-height: 14px; }
.ink { position: absolute; left: 455px; top: 49px; }

/* sheet tabs */
.sheettabs { height: 24px; background: #e6e6e6; border-bottom: 1px solid #c9c9c9; display: flex; font-size: 10.500px; color: #555; }
.navs { width: 83px; padding: 9px 0 0 23px; display: flex; gap: 19px; }
.navs i { border: 3px solid transparent; height: 0; width: 0; }
.navs .l { border-right: 4px solid #c3c3c3; border-left: 0; }
.navs .rr { border-left: 4px solid #c3c3c3; border-right: 0; }
.tab { height: 21px; display: grid; place-items: center; line-height: 14px; padding-top: 1px; }
.first { width: 62px; border-left: 1px solid #a0a0a0; }
.cur { width: 68px; background: #fff; border-bottom: 2px solid #217346; border-left: 1px solid #aaa; border-right: 1px solid #aaa; color: #217346; padding-top: 2px; }
.last.tab { width: 67px; border-right: 1px solid #a0a0a0; }
.plus { margin: 5px 0 0 27px; }
.sheettabs .dots { margin-left: 633px; height: 23px; width: 14px; }
.hscroll { margin: 5px 0 0 6px; display: flex; width: 608.500px; height: 14px; }
.hscroll .sb { height: 14px; }
.hscroll .thumb { width: 503px; background: #fff; border: 1px solid #b5b5b5; border-left: 0; }
.hscroll .space { flex: 1; background: #dcdcdc; }

/* status bar */
.status { height: 18px; background: #f3f2f1; display: flex; align-items: center; font-size: 9.700px; }
.ready { margin: 0 auto 0 6px; }
.view { width: 33.500px; height: 18px; display: grid; place-items: center; }
.view.on { background: #d0d0d0; }
.zoom { width: 109.500px; display: flex; align-items: center; gap: 6px; padding-left: 4px; }
.mn { width: 6px; height: 1px; background: #555; }
.track { width: 86px; height: 9px; background: linear-gradient(#aaa, #aaa) 0 4px / 100% 1px no-repeat; }
.track i { width: 3px; height: 9px; margin: 0 auto; background: #555; }
.pc { margin: 0 7px 0 12px; }

/* taskbar */
.taskbar { height: 33px; background: #1e1e1e; display: flex; color: #fff; }
.start { width: 40px; display: grid; place-items: center; }
.tsearch { width: 287px; background: #f2f2f2; display: flex; align-items: center; gap: 9px; padding-left: 10px; font-size: 12.500px; color: #3c3c3c; margin-right: 2px; }
.app-ic { width: 40.800px; display: grid; place-items: center; background: linear-gradient(#76b9ed, #76b9ed) center bottom / 33px 0 no-repeat; }
.run { background-size: 33px 2px; }
.active { background-color: #4a4a4a; background-size: 41px 2px; }
.tray { margin-left: auto; display: grid; grid-template-columns: 11px 14px 14px 22px 49px 30px; align-items: center; justify-items: center; padding-right: 9px; column-gap: 7px; font-size: 10px; }
.two { display: flex; flex-direction: column; align-items: center; line-height: 14.500px; }
.notif { position: relative; margin-left: 6px; }
.notif span { position: absolute; left: 8px; top: 10px; font-size: 10px; line-height: 13px; }
```

FILE: grid.js
```
// A|B|C|width of C|D|E|F|G|I|J|K|L|M|N|O|P|Q  (column H holds the same due date everywhere)
const CT = 'CLARO CONTROLE ON+ ', PO = 'CLARO PÓS ON ', CC = ' COMBO CONVERGENTE', DP = 'DEPENDENTE ON DADOS E VOZ';
const raw = [
`01/08/2024|1723556|LUZIA BEZERRA DA SILVA|125.5|042.609.238-46|19995198553|Migração P|${CT}18GB|19995198553||SUELEN APARECIDA BER||S|||009 LEME|N`,
`31/08/2024|1766447|EDNEI CARVALHO DA SILVA BAGGIO|182.3|007.824.859-01|41987770787|Ativação D|${DP} COMBO GRÁTIS|45998179177||DANIEL MARC|claudiabag|N|||071 SJ PIN|N`,
`01/08/2024|1723679|MARIA TERESINHA PAROLIM DE OLIVEIRA|209.2|073.857.018-41|19989106047|Ativação C|${CT}18GB|1935716661||SUELEN APARECIDA BER||N|||009 LEME|N`,
`31/08/2024|1766182|NIVIA REGINA NASCIMENTO CRUZ LAMBIA|215|145.072.218-03|41988624941|Ativação D|${DP} COMBO GRÁTIS|413465465||LUIS ANTONI|EUNAOTEN|S|||071 SJ PIN|S`,
`01/08/2024|1724118|TATIANA RODRIGUES CARDOSO|160.3|019.481.019-47|12981797827|Ativação P|${PO}100GB COMBO|12981797827||ANDERSON D|tati_rcardo|N|||167 SAO S|S`,
`31/08/2024|1765995|RONALDO FERREIRA BOIN|131|100.392.168-02|11945670321|Ativação D|${DP}|1178218750|11976838311|LORRAYNY BE|ronaldo.b|N|28/09/2024|F|119 S BERN|N`,
`01/08/2024|1724456|CAMILA ALVES MACEDO|122.1|600.380.648-63|19994426942|Ativação C|${CT}25GB|19989336641||NATHALY DOS SANTOS F||S|||111 CAMP|N`,
`31/08/2024|1765933|MARIA CRISTINA DIAS SANTOS|155.5|928.099.285-68|11939568937|Ativação C|${CT}25GB|11989251045||GEOVANNA S|mariasilva|N|||189 CAMP|N`,
`01/08/2024|1724616|JOSE MACHADO DE OLIVEIRA|146.9|007.178.949-91|41999514323|Ativação P|${PO}25GB${CC}|41999712575||JONATAS BRUNO DE SO||N|||072 CURIT|S`,
`31/08/2024|1765868|JOSEFINA MARIA DE ARAUJO SILVA|177.5|325.369.018-07|16992504146|Ativação C|${CT}18GB|1639523347|1639523340|DAIANE CRIST|daianealv|S|||022 PITAN|N`,
`01/08/2024|1724674|ERIKA DE PAULA|82.1|976.953.606-78|31984497372|Ativação P|${PO}25GB${CC}|31984497372||ELEN DE FATIMA CRUZ||N|||187 NOVA|S`,
`31/08/2024|1765852|DAIANE CRISTINA ALVES CARDOSO|177.2|428.791.988-28|16992808678|Migração P|${CT}18GB|16992818054|1639523347|DAIANE CRIST|DAIANEAL|S|||022 PITAN|N`,
`01/08/2024|1724685|KEREN TAYNA DE ASSIS GOMES PARREIRA|209.9|105.869.526-67|16992537702|Migração P|${PO}150GB COMBO|16992537702||BRUNA APAR|ktagp.parr|S|||024 RIBEIR|N`,
`31/08/2024|1765562|LUIZ HENRIQUE DAVI ANTUNES|156.8|083.240.169-29|41987412332|Ativação C|${CT}18GB|41999559595||RAPHAEL SILV|luizdavi93|S|||091 CURIT|N`,
`01/08/2024|1724879|SILVIO DIAS DA SILVA|108.6|651.807.715-87|11954554342|Ativação P|${PO}25GB|11905795180||GEOVANNA S|silvodias4|S|||189 CAMP|S`,
`31/08/2024|1765441|LUIS CARLOS DOS SANTOS|132|176.938.488-00|16991774536|Migração P|${CT}18GB|1639523347|1639523340|DAIANE CRIST|daianealv|N|||022 PITAN|N`,
`01/08/2024|1724945|MARCIA FERNANDES DE SOUZA|158.6|051.452.998-93|11991849915|Migração P|${CT}25GB|55267786||JEFERSON DA SILVA ARA||N|||189 CAMP|N`,
`31/08/2024|1765432|ELIZEU CARDOSO ALVES|120.4|731.333.029-49|43984333031|Ativação P|${PO}25GB${CC}|43984121852||GISELE SANTO|cardosoel|N|||174 LONDR|S`,
`02/08/2024|1725095|FREDDY WILLIAM FONSECA MATTAR|183.1|391.960.206-44|31995388880|Ativação C|${CT}23GB COMBO|31995388880||PEDRO HENRI|freddybilm|N|||105 BH SH|S`,
`30/08/2024|1765069|MAURO BERLOCHE|95|113.883.468-85|16994151764|Migração P|${PO}150GB|1638265444||LEONARDO H|maurober|S|||048 ORLÂN|N`,
`02/08/2024|1725157|WILSON ROBERTO FONSECA|142.7|919.769.108-97|15998452393|Ativação C|${CT}30GB COMBO|15998452393||CARLOS WILL|wilfonsec|N|||131 SOROC|S`,
`30/08/2024|1764969|MATEUS JOSE MARQUES BIAJOTI|165.2|393.195.778-03|19994408431|Migração P|${CT}25GB FÁCIL|19994408431|1936561020|FRANCIELE IN|mateusjos|S|||092 MOCO|N`,
`02/08/2024|1725302|EVANDRO LUIS TREGANSIN|137|622.421.210-49|47988516635|Ativação P|${PO}25GB${CC}|51991447373||WILSON ARTH|evandroin|N|||182 CAMB|N`,
`30/08/2024|1764929|MARCO ANTONIO DA SILVA|140.3|101.506.658-57|16992389510|Ativação D|${DP}|16996034477||LUANA LIMA|marcos2@|N|||056 SERRA|N`,
`02/08/2024|1725500|SIMONE SOUZA|78.7|915.582.715-20|11990258073|Ativação C|${CT}25GB|11980845800||GEOVANNA S|joaoa2030|S|||189 CAMP|S`,
`30/08/2024|1764811|JHONY OTAVIO SILVA NEVES|144.8|417.071.248-09|19999527904|Ativação C|${CT}23GB COMBO|19999527904||FELIPE ANTON|jhonyotav|N|||059 SÃO JO|S`,
`02/08/2024|1725608|KLEBER VENCESLAU DE SOUZA CARVALHO|210.9|029.696.792-05|47988422477|Ativação P|${PO}25GB|47996800246||JANAINA DA C|klebercarv|S|||183 BALNE|N`,
`30/08/2024|1764703|EMANOEL RICARDO FIGUEIRED O|166.4|347.489.058-16|15981370871|Ativação P|${PO}50GB COMBO|1530226775||ANA BEATRIZ|emanoel_|N|23/09/2024|F|132 TATUÍ|S`,
`02/08/2024|1725775|ELEN CRISTINA ARAUJO DE SOUSA|171.7|223.483.308-65|19994693727|Migração P|${PO}25GB|1199989401||GEOVANNA S|elen_sous|N|||189 CAMP|N`,
`30/08/2024|1764346|VALDIR ANTONIO ANACLETO|147.2|345.126.089-15|48998563653|Ativação C|${CT}18GB|48984563653|48984533653|JOAO VICTOR|andrevala|N|||193 CRICIU|S`,
`02/08/2024|1725913|EDSON DE OLIVEIRA COSTA|137.8|692.447.406-30|31982730027|Ativação P|${PO}150GB COMBO|31985269267||PABLO LUIZ M|ejcigano@|N|||115 BH SH|S`,
`30/08/2024|1763800|YARA PAULINA GIANESELLA|139.5|229.247.018-72|12981476706|Ativação C|${CT}25GB|1238421572||LAIS TUCCILLO|yarapg195|N|||169 UBATU|S`,
`02/08/2024|1725966|MARTA CRISTINA PERUZO MARINO|177|087.319.178-10|44999482756|Ativação P|${PO}25GB${CC}|44999482756||CARLOS ALEX|martamar|N|||069 MARIN|S`,
`29/08/2024|1763575|GIOVANA MIKI FERNANDES ITO|159.9|427.413.708-26|43984240406|Migração P|${PO}25GB${CC}|43984240406||PAULO ROBER|giovanam|N|||175 LONDR|N`,
`02/08/2024|1726155|MARCELO BICHARA MATIAS|140.7|252.544.658-59|16982077694|Ativação C|${CT}18GB|16997380569||SIMONI DA SI|mmatiasso|N|23/09/2024|A|094 SAO C|S`,
`29/08/2024|1763417|CLAUDIO TOMAZINI|100.7|645.064.288-20|11981804350|Ativação P|${PO}25GB${CC}|1144535268||EDER RENATO|claudio.to|S|||118 S BERN|S`,
`02/08/2024|1726186|ROSEANNE GUIMARAES DA SILVA|169.7|273.300.068-31|12997911174|Ativação P|${PO}25GB${CC}|12997911174||RENATO DO C|roseanne.|N|||042 SÃO J.|S`,
];

const planWidth = {
  [CT + '18GB']: 144.9, [CT + '25GB']: 144.9, [CT + '23GB COMBO']: 187.5, [CT + '30GB COMBO']: 187.5, [CT + '25GB FÁCIL']: 176,
  [DP]: 158.5, [DP + ' COMBO GRÁTIS']: 239.9,
  [PO + '25GB']: 105, [PO + '150GB']: 111, [PO + '50GB COMBO']: 147.8, [PO + '100GB COMBO']: 153.3, [PO + '150GB COMBO']: 153.3,
  [PO + '25GB' + CC]: 226.3,
};

const grid = document.getElementById('grid');
let html = '<div class="row letters"><div class="corner"><i></i></div>' +
  [...'ABCDEFGHIJKLMNOPQ'].map(l => `<div class="${l === 'C' ? 'sel' : l === 'Q' ? 'last' : ''}">${l}</div>`).join('') + '</div>';

const heads = [['Data', 23], ['Atend', 31.5], ['Cliente', 37], ['CPF', 19], ['Telefone', 46.5], ['Tipo', 23], ['Plano', 29], ['1ª Fatura', 45.5], ['Telefone Residencial', 108], ['Telefone Contato', 90.5], ['Vendedor', 51.5], ['e-mail', 33], ['Inad', 22], ['Dt Contato', 54.5], ['Sit', 13.5], ['Local', 25.5], ['Por', 17.5]];
html += '<div class="row head"><div class="rh">1</div>' + heads.map(([t, w], i) =>
  `<div class="h"><span data-w="${w}">${t}</span>${i < 16 ? '<div class="fbtn"><i class="tri"></i></div>' : ''}</div>`).join('') + '</div>';

raw.forEach((line, k) => {
  const n = k + 2;
  const [a, b, c, cw, d, e, f, g, i, j, kk, l, m, nn, o, p, q] = line.split('|');
  const tone = n < 4 ? 'lime' : n % 2 ? 'white' : 'blue';
  const cell = (t, cls = 'txt') => `<div class="d ${cls}">${t}</div>`;
  const tel = t => cell(t, 'tel' + (t ? ' err' : ''));
  const fit = (t, w) => `<span data-w="${w}">${t}</span>`;
  html += `<div class="row ${tone}"><div class="rh${n === 4 ? ' curh' : ''}">${n}</div>` +
    cell(a, 'num date') + cell(b, 'num') + cell(fit(c, cw)) + cell(d, 'cpf') + tel(e) + cell(f, 'txt kind') + cell(fit(g, planWidth[g])) +
    cell('20/09/2024', 'num date') + tel(i) + tel(j) +
    (l ? cell(kk, 'txt seller') + cell(l, 'txt mail') : cell(kk, 'txt seller wide')) +
    cell(m) + cell(nn, 'num date') + cell(o) + cell(p, 'txt place') + cell(q) + '</div>';
});
html += '<div class="row white"><div class="rh"></div>' + [...'ABCDEFGHIJKLMNOPQ'].map(l =>
  `<div class="d ${l === 'E' || l === 'I' ? 'tel err' : ''}"></div>`).join('') + '</div>';
grid.innerHTML = html;

// Tracks each label so that it fills its nominal width.
document.querySelectorAll('[data-w]').forEach(el => {
  el.style.letterSpacing = '0';
  const want = +el.dataset.w, len = el.textContent.length;
  const now = el.getBoundingClientRect().width;
  el.style.letterSpacing = ((want - now) / len).toFixed(3) + 'px';
});
```
